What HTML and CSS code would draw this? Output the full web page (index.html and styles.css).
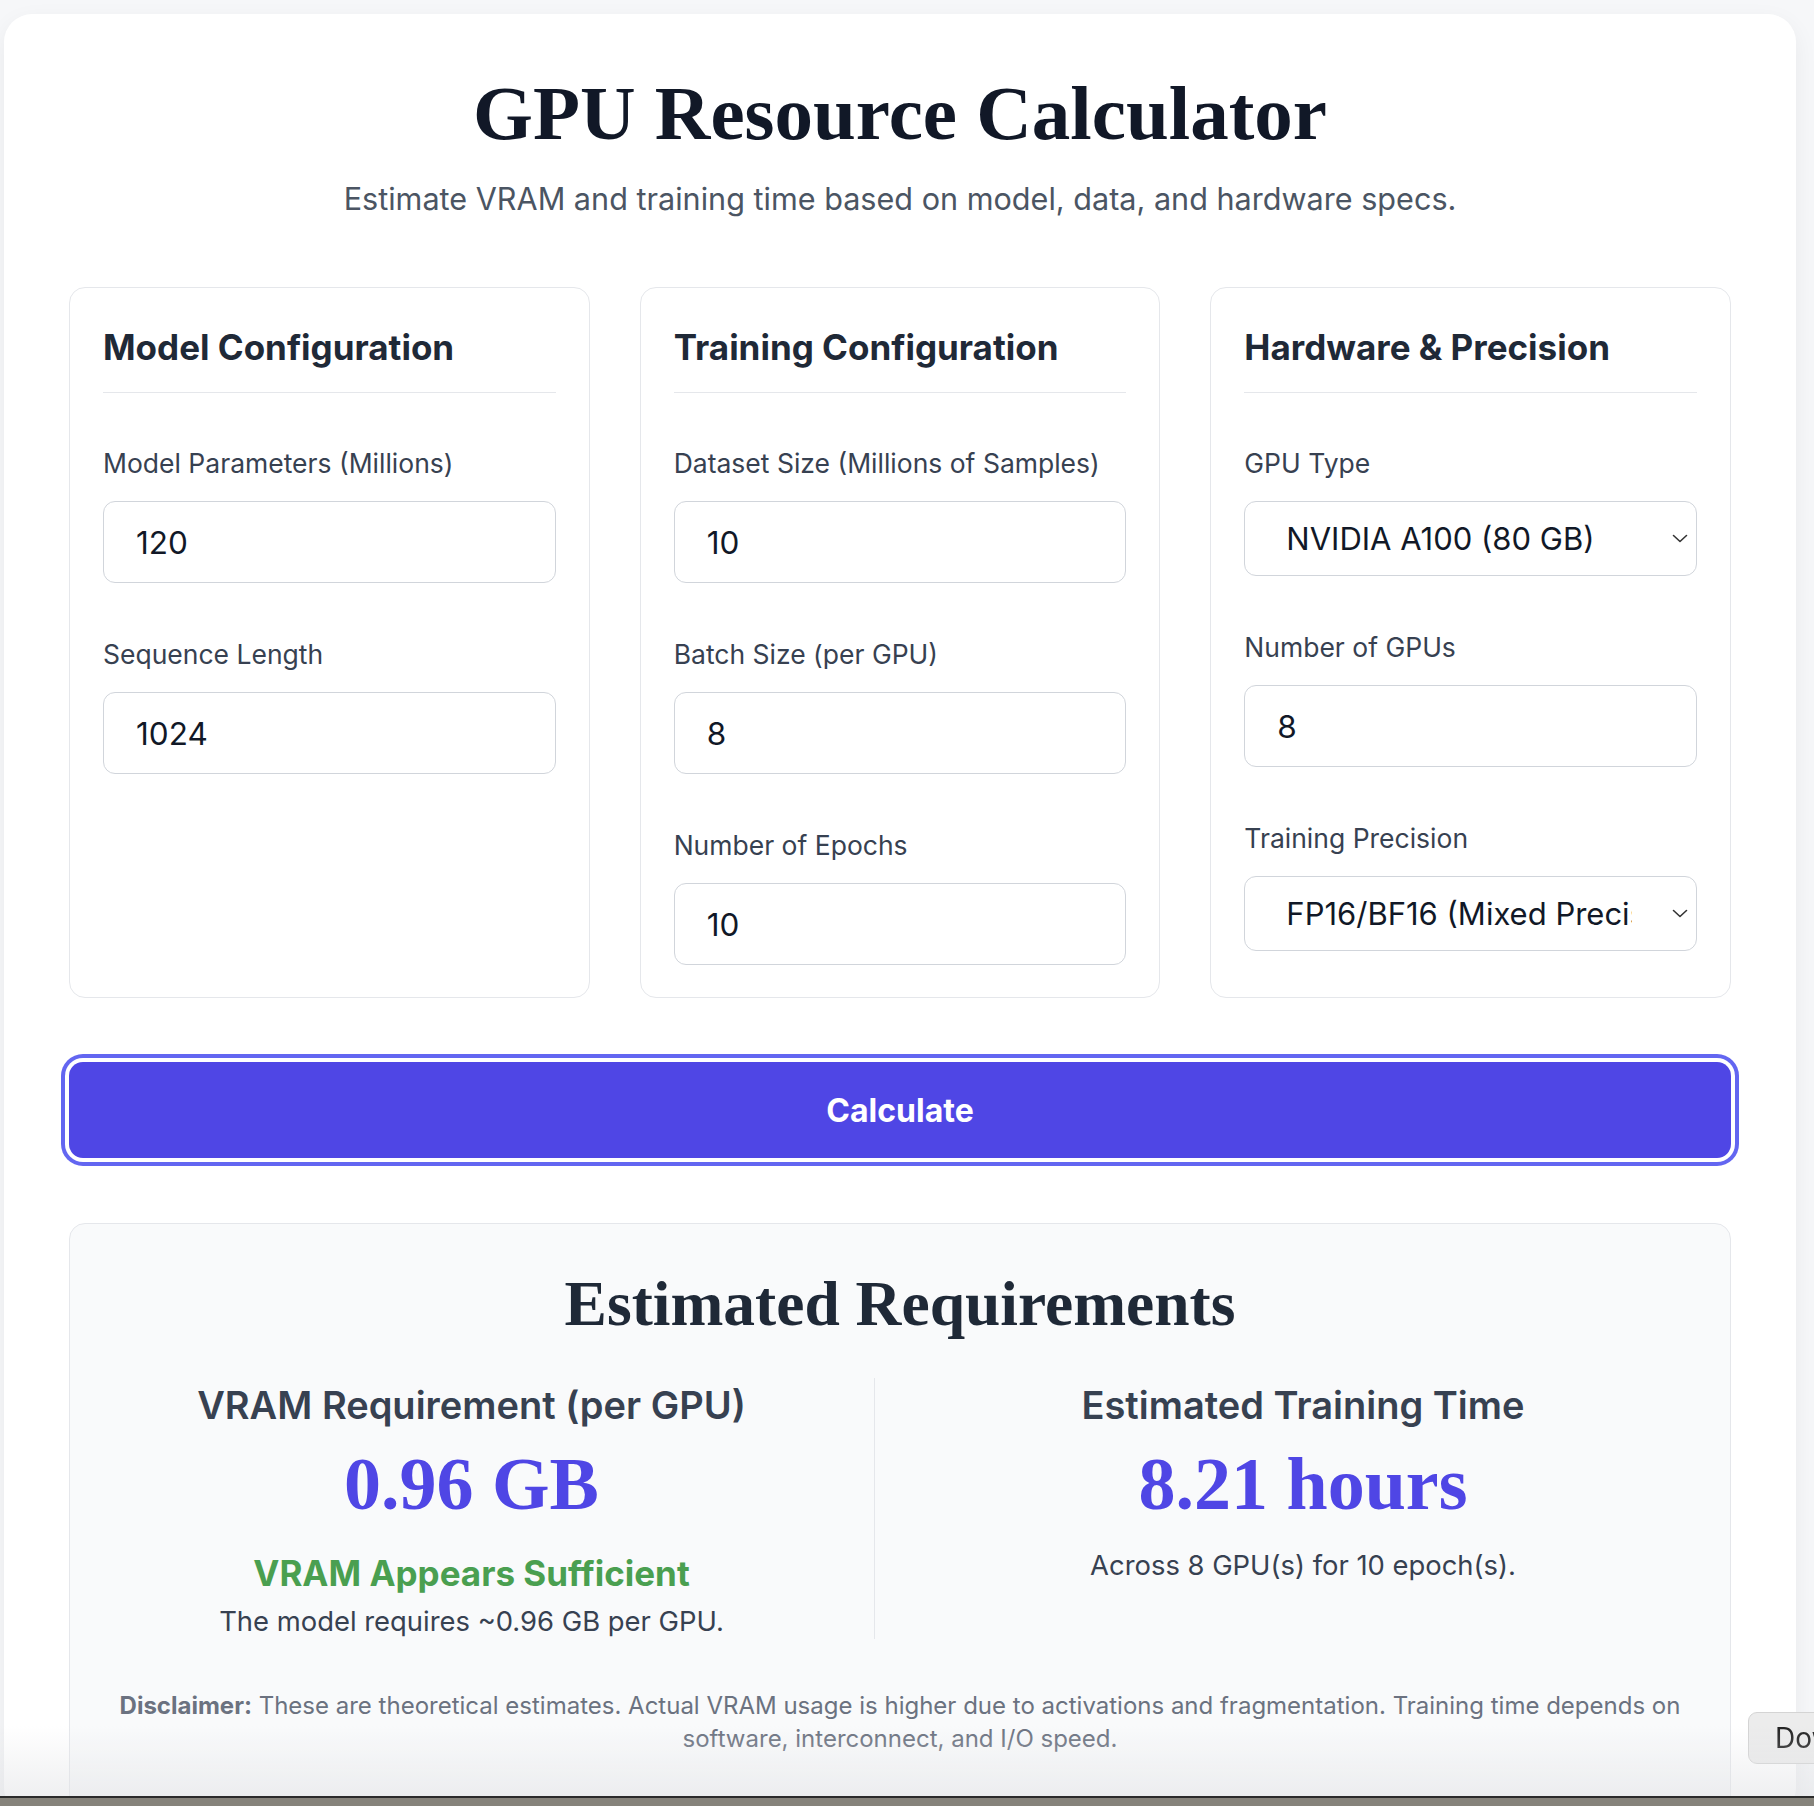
FILE: index.html
```html
<!DOCTYPE html>
<html lang="en">
<head>
<meta charset="utf-8">
<title>GPU Resource Calculator</title>
<link rel="stylesheet" href="styles.css">
</head>
<body>
<div class="page">
  <header class="hero">
    <h1 class="title">GPU Resource Calculator</h1>
    <p class="subtitle">Estimate VRAM and training time based on model, data, and hardware specs.</p>
  </header>

  <div class="config-grid">
    <section class="card">
      <h2 class="card-title">Model Configuration</h2>
      <div class="field">
        <label class="field-label">Model Parameters (Millions)</label>
        <input class="field-input" type="text" value="120">
      </div>
      <div class="field">
        <label class="field-label">Sequence Length</label>
        <input class="field-input" type="text" value="1024">
      </div>
    </section>

    <section class="card">
      <h2 class="card-title">Training Configuration</h2>
      <div class="field">
        <label class="field-label">Dataset Size (Millions of Samples)</label>
        <input class="field-input" type="text" value="10">
      </div>
      <div class="field">
        <label class="field-label">Batch Size (per GPU)</label>
        <input class="field-input" type="text" value="8">
      </div>
      <div class="field">
        <label class="field-label">Number of Epochs</label>
        <input class="field-input" type="text" value="10">
      </div>
    </section>

    <section class="card">
      <h2 class="card-title">Hardware &amp; Precision</h2>
      <div class="field">
        <label class="field-label">GPU Type</label>
        <div class="select-wrap">
          <select class="field-select"><option>NVIDIA A100 (80 GB)</option></select>
          <svg class="chevron" viewBox="0 0 16 9" width="16" height="9"><path d="M1.5 1.5l6.5 6 6.5-6" fill="none" stroke="#333" stroke-width="1.6" stroke-linecap="round" stroke-linejoin="round"/></svg>
        </div>
      </div>
      <div class="field">
        <label class="field-label">Number of GPUs</label>
        <input class="field-input" type="text" value="8">
      </div>
      <div class="field">
        <label class="field-label">Training Precision</label>
        <div class="select-wrap">
          <select class="field-select"><option>FP16/BF16 (Mixed Precision)</option></select>
          <svg class="chevron" viewBox="0 0 16 9" width="16" height="9"><path d="M1.5 1.5l6.5 6 6.5-6" fill="none" stroke="#333" stroke-width="1.6" stroke-linecap="round" stroke-linejoin="round"/></svg>
        </div>
      </div>
    </section>
  </div>

  <button class="calc-btn" type="button">Calculate</button>

  <section class="results">
    <h2 class="results-title">Estimated Requirements</h2>
    <div class="results-grid">
      <div class="result-col result-col--left">
        <h3 class="result-label">VRAM Requirement (per GPU)</h3>
        <p class="result-value">0.96 GB</p>
        <p class="status-ok">VRAM Appears Sufficient</p>
        <p class="result-note result-note--tight">The model requires ~0.96 GB per GPU.</p>
      </div>
      <div class="result-col result-col--right">
        <h3 class="result-label">Estimated Training Time</h3>
        <p class="result-value">8.21 hours</p>
        <p class="result-note">Across 8 GPU(s) for 10 epoch(s).</p>
      </div>
    </div>
    <p class="disclaimer"><strong>Disclaimer:</strong> These are theoretical estimates. Actual VRAM usage is higher due to activations and fragmentation. Training time depends on software, interconnect, and I/O speed.</p>
  </section>
</div>

<div class="float-btn">Download</div>
<div class="bottom-fade"></div>
<div class="dock-strip"></div>
</body>
</html>
```

FILE: styles.css
```css
* { box-sizing: border-box; }

html, body {
  margin: 0;
  padding: 0;
}

body {
  background: #f6f7f9;
  font-family: Inter, "Noto Sans", "Liberation Sans", sans-serif;
  color: #1f2937;
  height: 1806px;
  overflow: hidden;
}

.page {
  margin: 14px 18px 0 4px;
  background: #ffffff;
  border-radius: 28px;
  padding: 53px 65px 0;
  min-height: 1800px;
  box-shadow: 0 8px 24px rgba(17, 24, 39, 0.06);
}

/* hero */
.hero {
  text-align: center;
}

.title {
  margin: 0;
  font-family: "Liberation Serif", "DejaVu Serif", serif;
  font-weight: 700;
  font-size: 77px;
  line-height: 92px;
  color: #111827;
}

.subtitle {
  margin: 20px 0 0;
  font-size: 30.6px;
  line-height: 40px;
  color: #4b5563;
}

/* config cards */
.config-grid {
  margin-top: 68px;
  display: grid;
  grid-template-columns: repeat(3, 1fr);
  column-gap: 50px;
}

.card {
  border: 1.5px solid #e5e7eb;
  border-radius: 16px;
  padding: 33px 33px 32px;
  background: #fff;
}

.card-title {
  margin: 0;
  font-size: 35px;
  line-height: 52px;
  font-weight: 700;
  color: #1f2937;
  padding-bottom: 19px;
  border-bottom: 1.5px solid #e5e7eb;
}

.field {
  display: flex;
  flex-direction: column;
  gap: 20px;
  margin-top: 53px;
}

.card-title + .field {
  margin-top: 52px;
}

.field-label {
  font-size: 26.5px;
  line-height: 36px;
  color: #374151;
}

.field-input,
.field-select {
  width: 100%;
  font-family: inherit;
  color: #111827;
  background: #fff;
  border: 1.5px solid #d1d5db;
  border-radius: 12px;
  outline: none;
}

.field-input {
  height: 82px;
  font-size: 31.5px;
  padding: 0 20px 0 32px;
}

.select-wrap {
  position: relative;
}

.field-select {
  appearance: none;
  -webkit-appearance: none;
  height: 75px;
  font-size: 31px;
  padding: 0 64px 0 41px;
}

.chevron {
  position: absolute;
  right: 9px;
  top: 33px;
  pointer-events: none;
}

/* button */
.calc-btn {
  display: block;
  width: 100%;
  margin-top: 64px;
  height: 96px;
  border: none;
  border-radius: 14px;
  background: #4f46e5;
  color: #ffffff;
  font-family: inherit;
  font-size: 32px;
  font-weight: 700;
  box-shadow: 0 0 0 4px #ffffff, 0 0 0 8px #6366f1;
  cursor: pointer;
}

/* results */
.results {
  margin-top: 65px;
  background: #f9fafb;
  border: 1.5px solid #e5e7eb;
  border-radius: 16px;
  padding: 42px 33px 60px;
  text-align: center;
}

.results-title {
  margin: 0;
  font-family: "Liberation Serif", "DejaVu Serif", serif;
  font-weight: 700;
  font-size: 63.5px;
  line-height: 76px;
  color: #1f2937;
}

.results-grid {
  margin-top: 36px;
  display: grid;
  grid-template-columns: 772px 1fr;
}

.result-col--left {
  border-right: 1px solid #e5e7eb;
  padding-right: 34px;
}

.result-col--right {
  padding-left: 34px;
}

.result-label {
  margin: 0;
  font-size: 38px;
  line-height: 54px;
  font-weight: 600;
  color: #374151;
}

.result-value {
  margin: 12px 0 0;
  font-family: "Liberation Serif", "DejaVu Serif", serif;
  font-weight: 700;
  font-size: 74px;
  line-height: 81px;
  color: #4f46e5;
}

.status-ok {
  margin: 26px 0 0;
  font-size: 35px;
  line-height: 44px;
  font-weight: 700;
  color: #4a9f50;
}

.result-note {
  margin: 22px 0 0;
  font-size: 27.4px;
  line-height: 36px;
  color: #374151;
}

.result-note--tight {
  margin-top: 8px;
}

.disclaimer {
  margin: 50px 0 0;
  font-size: 24px;
  line-height: 33px;
  color: #6b7280;
}

.disclaimer strong {
  font-weight: 700;
  color: #6b7280;
}

/* overlays from the captured screen */
.float-btn {
  position: fixed;
  left: 1748px;
  top: 1712px;
  width: 120px;
  height: 52px;
  padding-left: 26px;
  background: #ececec;
  border: 1px solid #d4d4d4;
  border-radius: 9px;
  font-size: 28px;
  line-height: 50px;
  color: #222;
  white-space: nowrap;
  overflow: hidden;
}

.bottom-fade {
  position: fixed;
  left: 0;
  right: 0;
  bottom: 10px;
  height: 70px;
  background: linear-gradient(to bottom, rgba(230, 231, 234, 0), rgba(226, 227, 230, 0.55));
  pointer-events: none;
}

.dock-strip {
  position: fixed;
  left: 0;
  right: 0;
  bottom: 0;
  height: 10px;
  background: #86837b;
  border-top: 2px solid #2b2b2b;
}
```
